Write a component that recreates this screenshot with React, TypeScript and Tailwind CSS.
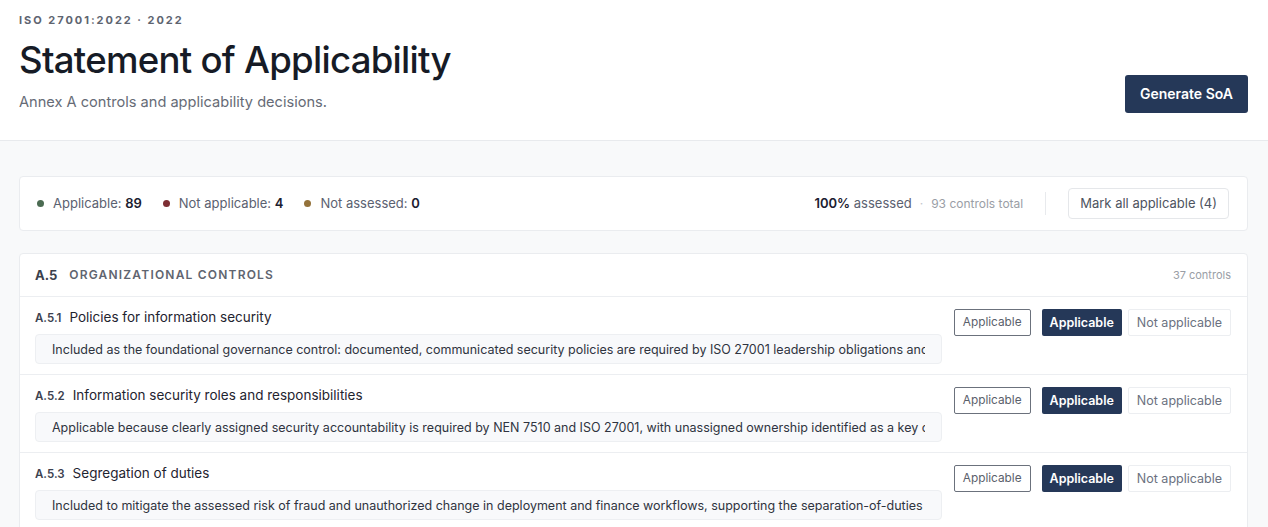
const controls = [
  {
    code: 'A.5.1',
    title: 'Policies for information security',
    rationale:
      'Included as the foundational governance control: documented, communicated security policies are required by ISO 27001 leadership obligations and supplier assurance expectations.',
  },
  {
    code: 'A.5.2',
    title: 'Information security roles and responsibilities',
    rationale:
      'Applicable because clearly assigned security accountability is required by NEN 7510 and ISO 27001, with unassigned ownership identified as a key organizational risk.',
  },
  {
    code: 'A.5.3',
    title: 'Segregation of duties',
    rationale:
      'Included to mitigate the assessed risk of fraud and unauthorized change in deployment and finance workflows, supporting the separation-of-duties expectations of auditors.',
  },
];

function Stat({ color, label, value }: { color: string; label: string; value: number }) {
  return (
    <span className="flex items-center gap-[9px]">
      <span className={`size-[7px] rounded-full ${color}`} />
      <span className="text-[13px] text-[#5b6170]">
        {label}: <span className="font-semibold text-[#1b2030]">{value}</span>
      </span>
    </span>
  );
}

function ControlRow({ code, title, rationale }: (typeof controls)[number]) {
  return (
    <div className="flex gap-3 border-t border-[#eceef1] pl-[15px] pr-4 pt-[11px] pb-[10px]">
      <div className="flex min-w-0 flex-1 flex-col gap-[7px]">
        <div className="flex items-baseline gap-2 leading-[18px]">
          <span className="text-[11.5px] font-semibold text-[#3c4250]">{code}</span>
          <span className="text-[13.5px] text-[#1f2430]">{title}</span>
        </div>
        <input
          readOnly
          value={rationale}
          className="h-[30px] w-full rounded-sm border border-[#edeff2] bg-[#f8f9fb] px-4 text-[12.5px] text-[#2f3440] outline-none"
        />
      </div>
      <div className="flex items-start pt-px">
        <span className="flex h-[27px] items-center rounded-[2px] border border-[#6b717c] px-2 text-[11.8px] text-[#5a606b]">
          Applicable
        </span>
        <div className="ml-[11px] flex gap-1.5">
          <button
            type="button"
            className="h-[27px] rounded-[2px] bg-[#253858] px-2 text-[12.5px] font-semibold text-white"
          >
            Applicable
          </button>
          <button
            type="button"
            className="h-[27px] rounded-[2px] border border-[#eceef1] bg-white px-2 text-[12.5px] text-[#6b7180]"
          >
            Not applicable
          </button>
        </div>
      </div>
    </div>
  );
}

export default function App() {
  return (
    <div className="min-h-screen bg-[#f8f9fa] font-['Inter',sans-serif]">
      <header className="flex items-end justify-between border-b border-[#e8eaed] bg-white pl-[19px] pr-5 pb-[27px] pt-3">
        <div>
          <p className="text-[11px] font-bold tracking-[0.18em] text-[#5e6470]">ISO 27001:2022 · 2022</p>
          <h1 className="mt-[9.5px] text-[36.6px] leading-[44px] font-medium tracking-[-0.02em] text-[#161b26]">
            Statement of Applicability
          </h1>
          <p className="mt-[9.5px] text-[14.6px] text-[#666b76]">Annex A controls and applicability decisions.</p>
        </div>
        <button
          type="button"
          className="h-[38px] rounded-[3px] bg-[#253858] px-[15px] text-sm font-semibold text-white"
        >
          Generate SoA
        </button>
      </header>

      <main className="pl-[19px] pr-5 pt-[35px]">
        <div className="flex h-[55px] items-center justify-between rounded-sm border border-[#eaecef] bg-white pl-[17px] pr-[18px]">
          <div className="flex items-center gap-[21px]">
            <Stat color="bg-[#4b6b52]" label="Applicable" value={89} />
            <Stat color="bg-[#7d2e33]" label="Not applicable" value={4} />
            <Stat color="bg-[#94723a]" label="Not assessed" value={0} />
          </div>
          <div className="flex items-center">
            <span className="text-[13px] text-[#5b6170]">
              <span className="font-semibold text-[#1b2030]">100%</span> assessed
            </span>
            <span className="mx-2 text-xs text-[#c2c6cc]">·</span>
            <span className="text-xs text-[#9a9ea6]">93 controls total</span>
            <span className="mx-[22px] h-[23px] w-px bg-[#e8eaed]" />
            <button
              type="button"
              className="h-[31px] rounded-sm border border-[#e5e7ea] bg-white px-[11px] text-[13px] text-[#4e5460]"
            >
              Mark all applicable (4)
            </button>
          </div>
        </div>

        <section className="mt-[22px] rounded-sm border border-[#eaecef] bg-white">
          <div className="flex h-[42px] items-center justify-between pl-[15px] pr-4">
            <div className="flex items-center gap-3">
              <span className="text-[13px] font-bold text-[#3a404c]">A.5</span>
              <span className="text-xs font-semibold tracking-[0.1em] text-[#5f6570]">ORGANIZATIONAL CONTROLS</span>
            </div>
            <span className="text-[11px] text-[#9a9ea6]">37 controls</span>
          </div>
          {controls.map((control) => (
            <ControlRow key={control.code} {...control} />
          ))}
        </section>
      </main>
    </div>
  );
}
